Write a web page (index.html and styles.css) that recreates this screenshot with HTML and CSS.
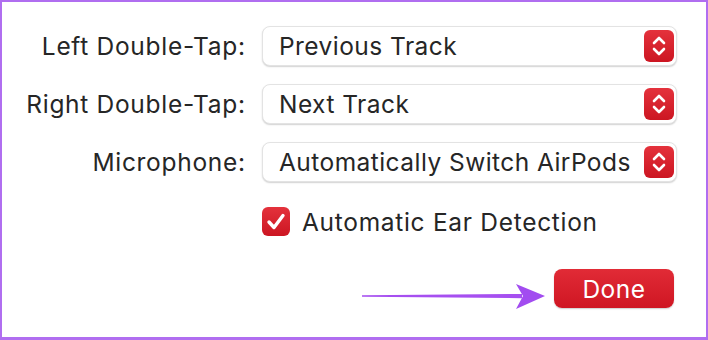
FILE: index.html
```html
<!DOCTYPE html>
<html>
<head>
<meta charset="utf-8">
<link rel="stylesheet" href="styles.css">
</head>
<body>
<div class="frame">
  <div class="form">
    <div class="label">Left Double-Tap:</div>
    <div class="popup"><span class="value">Previous Track</span><span class="stepper"><svg viewBox="0 0 30 32" width="30" height="32"><path d="M10 13 L15 8 L20 13 M10 19 L15 24 L20 19" fill="none" stroke="#fff" stroke-width="2.6" stroke-linecap="round" stroke-linejoin="round"/></svg></span></div>

    <div class="label">Right Double-Tap:</div>
    <div class="popup"><span class="value">Next Track</span><span class="stepper"><svg viewBox="0 0 30 32" width="30" height="32"><path d="M10 13 L15 8 L20 13 M10 19 L15 24 L20 19" fill="none" stroke="#fff" stroke-width="2.6" stroke-linecap="round" stroke-linejoin="round"/></svg></span></div>

    <div class="label">Microphone:</div>
    <div class="popup"><span class="value">Automatically Switch AirPods</span><span class="stepper"><svg viewBox="0 0 30 32" width="30" height="32"><path d="M10 13 L15 8 L20 13 M10 19 L15 24 L20 19" fill="none" stroke="#fff" stroke-width="2.6" stroke-linecap="round" stroke-linejoin="round"/></svg></span></div>

    <div class="spacer"></div>
    <label class="check">
      <span class="box"><svg viewBox="0 0 28 29" width="28" height="29"><path d="M7 15 L12 20.5 L21 8.5" fill="none" stroke="#fff" stroke-width="3.4" stroke-linecap="round" stroke-linejoin="round"/></svg></span>
      <span class="check-text">Automatic Ear Detection</span>
    </label>
  </div>
  <div class="actions">
    <svg class="arrow" viewBox="0 0 183 27" width="183" height="27">
      <path d="M0 12.2 L160 11 L160 15.2 L0 13.8 Z" fill="#a64ff0"/>
      <path d="M154 1 L183 13 L154 26 L161 13 Z" fill="#a24cf0"/>
    </svg>
    <button class="done">Done</button>
  </div>
</div>
</body>
</html>
```

FILE: styles.css
```css
html, body {
  margin: 0;
  padding: 0;
  background: #ffffff;
}

.frame {
  box-sizing: border-box;
  width: 708px;
  height: 340px;
  border: 2px solid #b06ef0;
  border-bottom-width: 3px;
  background: #ffffff;
  font-family: Inter, "Liberation Sans", Arial, sans-serif;
  color: #262626;
  padding-top: 24px;
}

.form {
  display: grid;
  grid-template-columns: 243px 415px;
  column-gap: 17px;
  row-gap: 18px;
  grid-auto-rows: 40px;
}

.label {
  font-size: 24.5px;
  text-align: right;
  align-self: center;
  letter-spacing: 0.7px;
  margin-right: -0.7px;
}

.popup {
  box-sizing: border-box;
  display: flex;
  align-items: center;
  justify-content: space-between;
  height: 40px;
  background: #ffffff;
  border: 1px solid #e3e3e3;
  border-radius: 8px;
  box-shadow: 0 1px 1.5px rgba(0, 0, 0, 0.18);
  padding: 0 2px 0 16px;
}

.value {
  font-size: 24.5px;
  letter-spacing: 0.45px;
  white-space: nowrap;
}

.stepper {
  display: block;
  flex: none;
  width: 30px;
  height: 32px;
  border-radius: 6px;
  background: linear-gradient(#e4323c, #cc1622);
}

.stepper svg {
  display: block;
}

.spacer {
  height: 0;
}

.check {
  display: flex;
  align-items: center;
  gap: 12px;
  margin-top: 3px;
}

.box {
  display: block;
  width: 28px;
  height: 29px;
  border-radius: 6px;
  background: linear-gradient(#e4323c, #cc1622);
}

.box svg {
  display: block;
}

.check-text {
  font-size: 24.5px;
  letter-spacing: 0.7px;
}

.actions {
  display: flex;
  align-items: center;
  margin-top: 27px;
  padding-left: 360px;
}

.arrow {
  display: block;
  margin-top: 16px;
}

.done {
  margin-left: 9px;
  width: 120px;
  height: 39px;
  border: none;
  border-radius: 8px;
  background: linear-gradient(#e12b36, #cf1623);
  color: #ffffff;
  font-family: Inter, "Liberation Sans", Arial, sans-serif;
  font-size: 24.5px;
  letter-spacing: 0.5px;
  padding: 0;
  box-shadow: 0 1px 1.5px rgba(0, 0, 0, 0.2);
}
```
